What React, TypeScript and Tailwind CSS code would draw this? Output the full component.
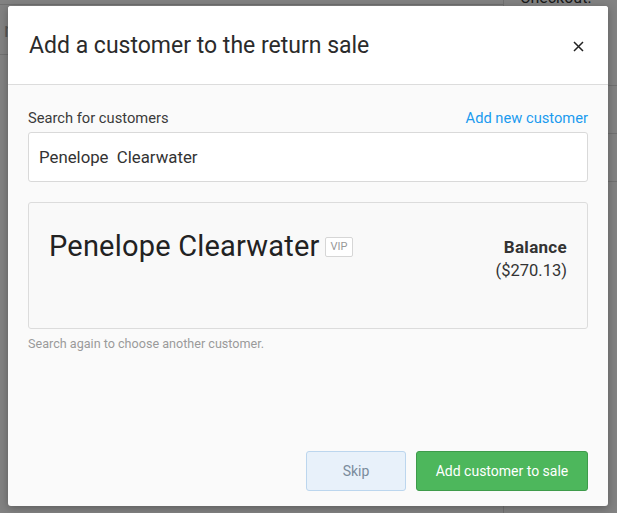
import React, { useState } from 'react';

export default function App() {
  const [query, setQuery] = useState('Penelope  Clearwater');

  return (
    <div
      className="relative h-[513px] w-[617px] overflow-hidden bg-white text-[#333]"
      style={{ fontFamily: 'Roboto, "Liberation Sans", sans-serif' }}
    >
      {/* page behind the modal */}
      <div className="flex h-full">
        <div className="flex flex-1 flex-col">
          <div className="h-[5px] border-b border-[#ddd]" />
          <div className="flex h-[50px] items-center border-b border-[#ddd] px-1 text-[20px] text-[#aaa]">
            r
          </div>
        </div>
        <div className="flex w-[114px] flex-col border-l border-[#ddd] text-[16px] text-[#333]">
          <div className="-mt-[12px] px-4 leading-[20px]">Checkout: -3 items</div>
          <div className="flex h-[58px] items-end border-b border-[#ddd] px-4 pb-[12px]">Remaining</div>
          <div className="flex h-[48px] items-center border-b border-[#ddd] px-4">Credit</div>
          <div className="flex h-[48px] items-center border-b border-[#ddd] px-4">Left</div>
        </div>
      </div>

      {/* overlay */}
      <div className="absolute inset-0 bg-black/[0.49]" />

      {/* modal */}
      <div className="absolute left-[8px] top-[6px] flex h-[500px] w-[600px] flex-col overflow-hidden rounded-[3px] bg-[#fafafa] shadow-[0_2px_8px_rgba(0,0,0,0.3)]">
        <div className="flex h-[79px] items-center justify-between border-b border-[#dcdcdc] bg-white pl-[21px] pr-[24px] pt-[3px]">
          <h1 className="text-[23px] font-normal text-[#2b2b2b]">Add a customer to the return sale</h1>
          <button className="flex h-[12px] w-[12px] items-center justify-center">
            <svg width="11" height="11" viewBox="0 0 11 11" fill="none" stroke="#222" strokeWidth="1.5">
              <path d="M1 1L10 10M10 1L1 10" />
            </svg>
          </button>
        </div>

        <div className="flex flex-1 flex-col px-[20px] pt-[24px]">
          <div className="flex items-center justify-between text-[14.7px] leading-[18px]">
            <label className="text-[#3a3a3a]">Search for customers</label>
            <a className="cursor-pointer text-[#1a9bef]">Add new customer</a>
          </div>
          <input
            className="mt-[5px] h-[50px] w-full rounded-[3px] border border-[#d9d9d9] bg-white px-[10px] text-[16.8px] text-[#333] outline-none"
            value={query}
            onChange={(e) => setQuery(e.target.value)}
          />

          <div className="mt-[20px] flex h-[127px] justify-between rounded-[3px] border border-[#dcdcdc] bg-[#f9f9f9] pl-[20px] pr-[20px] pt-[26px]">
            <div className="flex items-start gap-[5px]">
              <span className="text-[29px] leading-[34px] tracking-[0.2px] text-[#222]">Penelope Clearwater</span>
              <span className="mt-[8px] rounded-[2px] border border-[#d6d6d6] bg-white px-[5px] text-[11px] leading-[18px] text-[#999]">
                VIP
              </span>
            </div>
            <div className="flex flex-col items-end pt-[6px] text-[16.5px] leading-[24px]">
              <span className="text-[17px] font-bold tracking-[0.3px] text-[#333]">Balance</span>
              <span className="text-[#333]">($270.13)</span>
            </div>
          </div>
          <p className="mt-[7px] text-[12.6px] leading-[16px] text-[#9a9a9a]">Search again to choose another customer.</p>

          <div className="mt-auto flex justify-end gap-[10px] pb-[15px]">
            <button className="h-[40px] w-[100px] rounded-[3px] border border-[#bcd6ee] bg-[#e8f1fa] text-[14px] text-[#7b8c9c]">
              Skip
            </button>
            <button className="h-[40px] w-[172px] rounded-[3px] border border-[#3e9b4b] bg-[#4db75c] text-[14px] text-white">
              Add customer to sale
            </button>
          </div>
        </div>
      </div>
    </div>
  );
}
